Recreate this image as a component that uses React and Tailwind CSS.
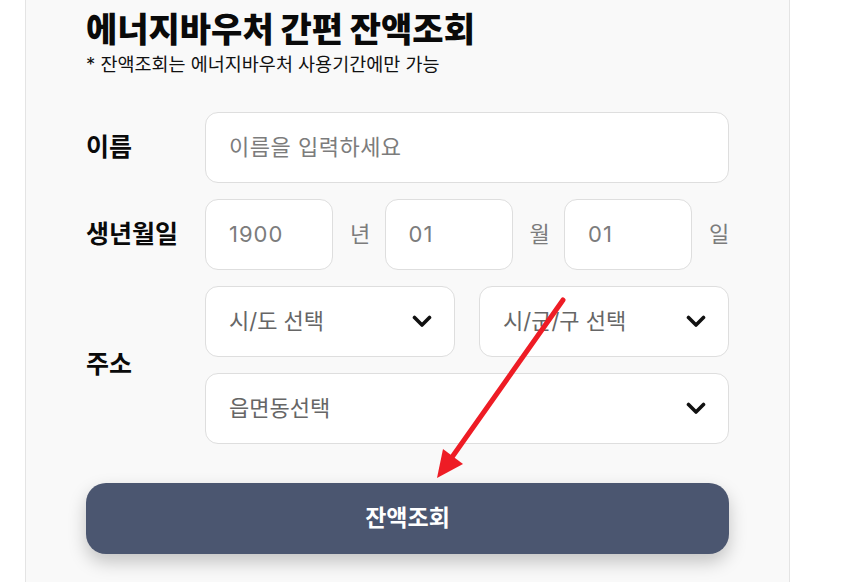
import React from "react";

const KR = { fontFamily: '"Inter", "Noto Sans CJK KR", sans-serif' };

function Chevron() {
  return (
    <svg width="20" height="13" viewBox="0 0 20 13" className="shrink-0">
      <path d="M2.5 2.5 L10 10 L17.5 2.5" fill="none" stroke="#111" strokeWidth="3.6" strokeLinecap="round" strokeLinejoin="round" />
    </svg>
  );
}

function Box({ children, className = "" }) {
  return (
    <div className={"h-[71px] bg-white border border-[#dedede] rounded-[13px] flex items-center pl-[23px] pr-[22px] text-[22px] text-[#7c7c7c] " + className}>
      {children}
    </div>
  );
}

function Select({ label, className = "" }) {
  return (
    <Box className={"justify-between " + className}>
      <span className="text-[#666]">{label}</span>
      <Chevron />
    </Box>
  );
}

function Unit({ children }) {
  return <span className="ml-[17px] text-[22px] text-[#7c7c7c] w-[20px]">{children}</span>;
}

export default function App() {
  return (
    <div className="relative w-[861px] h-[582px] overflow-hidden bg-white" style={KR}>
      <div className="ml-[25px] w-[765px] h-[582px] border-x border-[#e4e4e4] bg-[#f9f9f9] pl-[60px] pr-[60px]">
        <h1 className="pt-[8px] text-[34px] font-black leading-[44px] tracking-[0px] text-[#0a0a0a]">
          에너지바우처 간편 잔액조회
        </h1>
        <p className="mt-[1px] text-[18.5px] leading-[22px] text-[#111]">
          * 잔액조회는 에너지바우처 사용기간에만 가능
        </p>

        <div className="mt-[37px] flex flex-col gap-[16px]">
          <div className="flex items-center">
            <div className="w-[119px] text-[25px] font-bold text-[#0a0a0a]">이름</div>
            <Box className="flex-1">
              <span className="tracking-[0.5px]">이름을 입력하세요</span>
            </Box>
          </div>

          <div className="flex items-center">
            <div className="w-[119px] text-[25px] font-bold text-[#0a0a0a]">생년월일</div>
            <div className="flex-1 flex justify-between items-center">
              <div className="flex items-center">
                <Box className="w-[128px] tracking-[1px]">1900</Box>
                <Unit>년</Unit>
              </div>
              <div className="flex items-center">
                <Box className="w-[128px] tracking-[1px]">01</Box>
                <Unit>월</Unit>
              </div>
              <div className="flex items-center">
                <Box className="w-[128px] tracking-[1px]">01</Box>
                <Unit>일</Unit>
              </div>
            </div>
          </div>

          <div className="flex items-center">
            <div className="w-[119px] text-[25px] font-bold text-[#0a0a0a]">주소</div>
            <div className="flex-1 flex flex-col gap-[16px]">
              <div className="flex gap-[24px]">
                <Select label="시/도 선택" className="flex-1" />
                <Select label="시/군/구 선택" className="flex-1" />
              </div>
              <Select label="읍면동선택" />
            </div>
          </div>
        </div>

        <button className="mt-[39px] w-full h-[71px] rounded-[20px] bg-[#4b5670] text-white text-[23px] font-bold shadow-[0_8px_18px_rgba(0,0,0,0.22)]">
          잔액조회
        </button>
      </div>

      <svg className="absolute left-0 top-0 pointer-events-none" width="861" height="582" viewBox="0 0 861 582">
        <line x1="563" y1="300" x2="450" y2="460" stroke="#ee1c25" strokeWidth="5" strokeLinecap="round" />
        <polygon points="437,478 443,449 463,464" fill="#ee1c25" />
      </svg>
    </div>
  );
}
